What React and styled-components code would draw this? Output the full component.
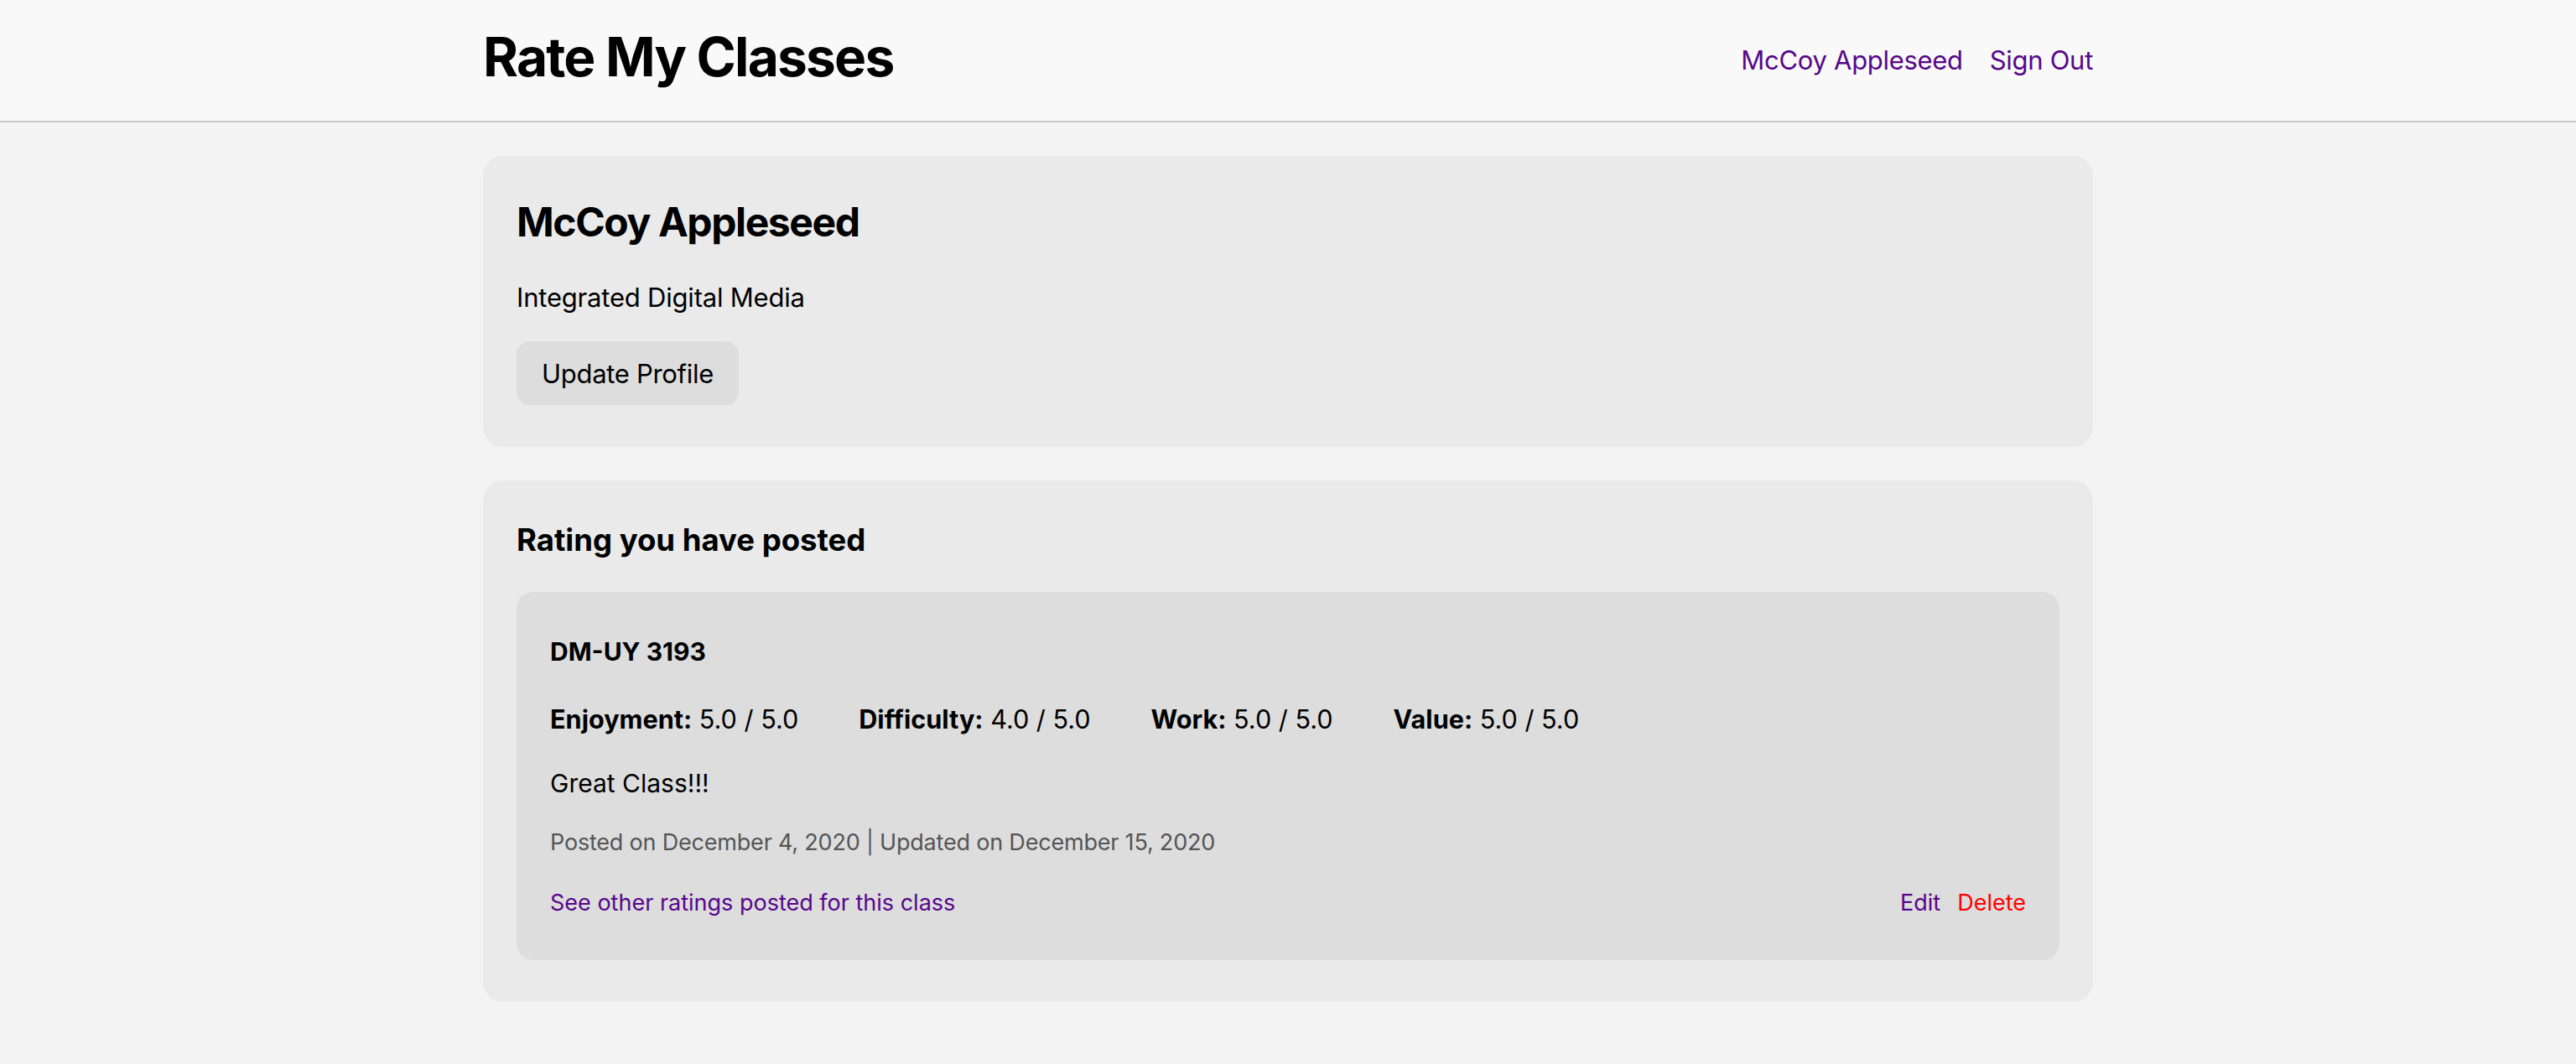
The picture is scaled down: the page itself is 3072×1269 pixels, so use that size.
import React from 'react';
import styled, { createGlobalStyle } from 'styled-components';

const GlobalStyle = createGlobalStyle`
  html, body {
    margin: 0;
    padding: 0;
    background: #f3f3f3;
    font-family: Inter, "Noto Sans", "Liberation Sans", sans-serif;
    color: #000;
  }
  * { box-sizing: border-box; }
`;

const TopBar = styled.header`
  height: 146px;
  background: #f9f9f9;
  border-bottom: 2px solid #c8c8c8;
  display: flex;
  justify-content: center;
`;

const TopBarInner = styled.div`
  width: 1920px;
  display: flex;
  align-items: center;
  justify-content: space-between;
`;

const Brand = styled.h1`
  margin: -9px 0 0;
  font-size: 64px;
  line-height: 1;
  font-weight: 700;
  letter-spacing: -1.8px;
`;

const Nav = styled.nav`
  display: flex;
  gap: 32px;
`;

const NavLink = styled.a`
  font-size: 31px;
  line-height: 1.2;
  letter-spacing: -0.3px;
  color: #57068c;
  text-decoration: none;
`;

const Main = styled.main`
  width: 1920px;
  margin: 40px auto 0;
  display: flex;
  flex-direction: column;
  gap: 40px;
`;

const Card = styled.section`
  background: #eaeaea;
  border-radius: 24px;
  padding: 50px 40px;
  display: flex;
  flex-direction: column;
  align-items: flex-start;
`;

const Name = styled.h2`
  margin: 0 0 42px;
  font-size: 48px;
  line-height: 1.2;
  font-weight: 700;
  letter-spacing: -1.4px;
`;

const Major = styled.p`
  margin: 0 0 34px;
  font-size: 31px;
  line-height: 1.2;
  letter-spacing: -0.2px;
`;

const Button = styled.button`
  font-family: inherit;
  font-size: 31px;
  line-height: 1.2;
  letter-spacing: -0.3px;
  padding: 20px 30px 19px;
  background: #dddddd;
  color: #000;
  border: none;
  border-radius: 16px;
`;

const SectionTitle = styled.h3`
  margin: 0 0 39px;
  font-size: 36.5px;
  line-height: 1.2;
  font-weight: 700;
`;

const RatingCard = styled.article`
  align-self: stretch;
  background: #dddddd;
  border-radius: 20px;
  padding: 53px 40px 52px;
  display: flex;
  flex-direction: column;
`;

const Course = styled.h4`
  margin: 0 0 45px;
  font-size: 30px;
  line-height: 1.2;
  font-weight: 700;
`;

const Scores = styled.div`
  display: flex;
  gap: 72px;
  margin-bottom: 40px;
`;

const Score = styled.span`
  font-size: 30.6px;
  line-height: 1.2;
  b { font-weight: 700; }
`;

const Comment = styled.p`
  margin: 0 0 37px;
  font-size: 30px;
  line-height: 1.2;
`;

const Meta = styled.p`
  margin: 0 0 39px;
  font-size: 27px;
  line-height: 1.2;
  letter-spacing: -0.2px;
  color: #555555;
`;

const Footer = styled.div`
  display: flex;
  justify-content: space-between;
  align-items: baseline;
`;

const Actions = styled.div`
  display: flex;
  gap: 20px;
`;

const SmallLink = styled.a`
  font-size: 27px;
  line-height: 1.2;
  color: ${p => (p.$danger ? '#ff0000' : '#57068c')};
  text-decoration: none;
`;

const scores = [
  { label: 'Enjoyment', value: '5.0 / 5.0' },
  { label: 'Difficulty', value: '4.0 / 5.0' },
  { label: 'Work', value: '5.0 / 5.0' },
  { label: 'Value', value: '5.0 / 5.0' },
];

export default function App() {
  return (
    <>
      <GlobalStyle />
      <TopBar>
        <TopBarInner>
          <Brand>Rate My Classes</Brand>
          <Nav>
            <NavLink href="#">McCoy Appleseed</NavLink>
            <NavLink href="#">Sign Out</NavLink>
          </Nav>
        </TopBarInner>
      </TopBar>
      <Main>
        <Card>
          <Name>McCoy Appleseed</Name>
          <Major>Integrated Digital Media</Major>
          <Button>Update Profile</Button>
        </Card>
        <Card>
          <SectionTitle>Rating you have posted</SectionTitle>
          <RatingCard>
            <Course>DM-UY 3193</Course>
            <Scores>
              {scores.map(s => (
                <Score key={s.label}><b>{s.label}:</b> {s.value}</Score>
              ))}
            </Scores>
            <Comment>Great Class!!!</Comment>
            <Meta>Posted on December 4, 2020 | Updated on December 15, 2020</Meta>
            <Footer>
              <SmallLink href="#">See other ratings posted for this class</SmallLink>
              <Actions>
                <SmallLink href="#">Edit</SmallLink>
                <SmallLink href="#" $danger>Delete</SmallLink>
              </Actions>
            </Footer>
          </RatingCard>
        </Card>
      </Main>
    </>
  );
}
